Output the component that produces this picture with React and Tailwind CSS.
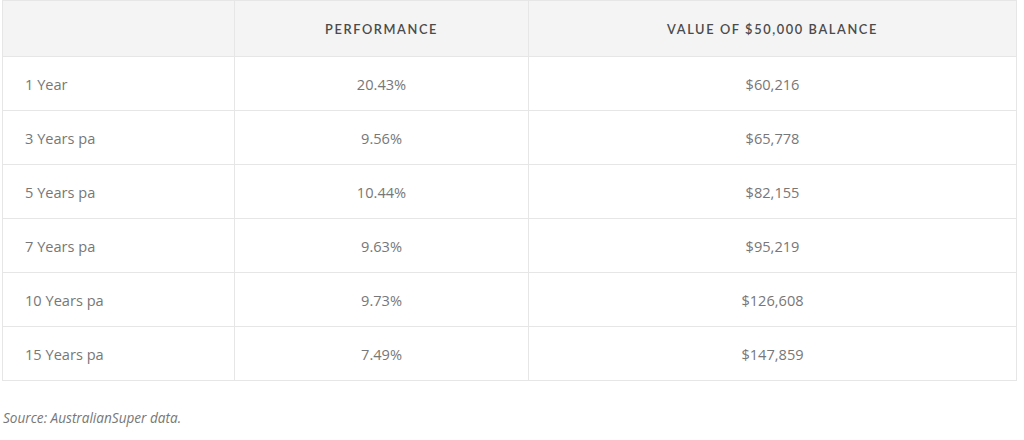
export default function App() {
  const rows = [
    ["1 Year", "20.43%", "$60,216"],
    ["3 Years pa", "9.56%", "$65,778"],
    ["5 Years pa", "10.44%", "$82,155"],
    ["7 Years pa", "9.63%", "$95,219"],
    ["10 Years pa", "9.73%", "$126,608"],
    ["15 Years pa", "7.49%", "$147,859"],
  ];
  const hf = { fontFamily: '"Lato", "Liberation Sans", sans-serif' };
  return (
    <div className="w-[1024px] h-[440px] bg-white" style={{ fontFamily: '"Open Sans", sans-serif' }}>
      <table className="ml-[2px] w-[1014px] table-fixed border-collapse">
        <colgroup>
          <col className="w-[232px]" />
          <col className="w-[294px]" />
          <col className="w-[488px]" />
        </colgroup>
        <thead>
          <tr className="h-[56px] bg-[#f4f4f4]">
            <th className="border border-[#e6e6e6]"></th>
            <th className="border border-[#e6e6e6] pt-[2px] text-[12.8px] font-semibold tracking-[1.6px] text-[#4a4a4a] text-center" style={hf}>PERFORMANCE</th>
            <th className="border border-[#e6e6e6] pt-[2px] text-[12.8px] font-semibold tracking-[1.6px] text-[#4a4a4a] text-center" style={hf}>VALUE OF $50,000 BALANCE</th>
          </tr>
        </thead>
        <tbody>
          {rows.map((r) => (
            <tr key={r[0]} className="h-[54px]">
              <td className="border border-[#e6e6e6] pl-[22px] pt-[2px] text-[14.6px] text-[#777]">{r[0]}</td>
              <td className="border border-[#e6e6e6] pt-[2px] text-center text-[14.6px] text-[#777]">{r[1]}</td>
              <td className="border border-[#e6e6e6] pt-[2px] text-center text-[14.6px] text-[#777]">{r[2]}</td>
            </tr>
          ))}
        </tbody>
      </table>
      <p className="mt-[27px] ml-[3px] text-[13.6px] italic text-[#777]">Source: AustralianSuper data.</p>
    </div>
  );
}
